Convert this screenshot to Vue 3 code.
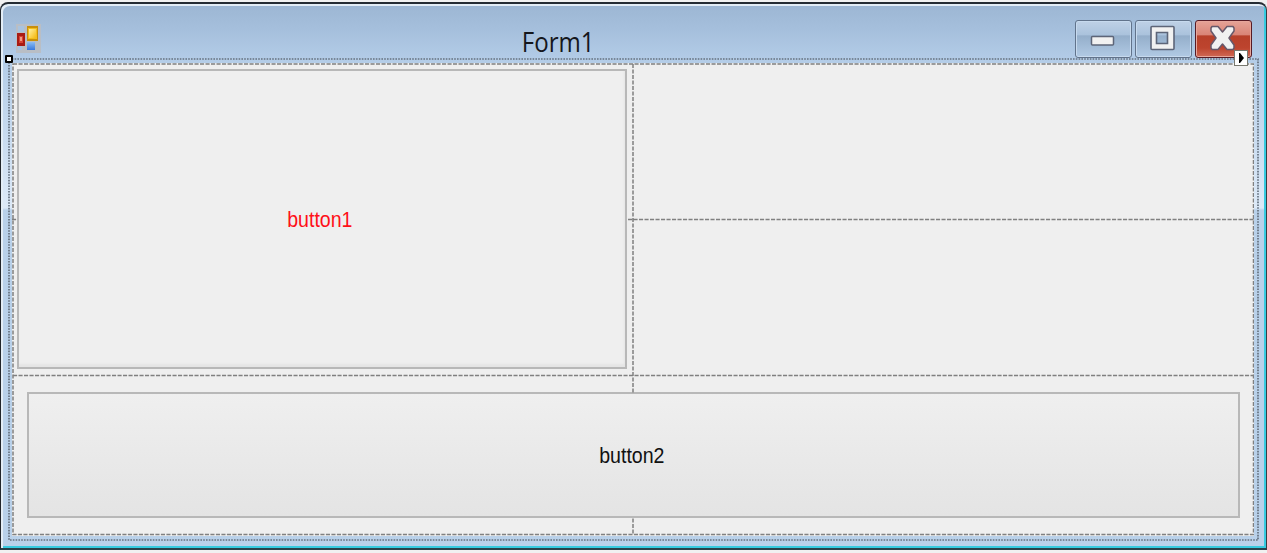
<script setup>
const title = 'Form1'
</script>

<template>
  <main class="window">
    <header class="titlebar">
      <svg class="app-icon" width="25" height="29" viewBox="0 0 25 29">
        <defs>
          <linearGradient id="gold" x2="1" y2="1"><stop stop-color="#fff1a0" /><stop offset="1" stop-color="#f6b910" /></linearGradient>
          <linearGradient id="blue" x2="0" y2="1"><stop stop-color="#8dbdf2" /><stop offset="1" stop-color="#3979df" /></linearGradient>
        </defs>
        <rect width="25" height="29" fill="#b9bec5" />
        <rect x="2" y="2" width="6" height="6" fill="#a9c3df" />
        <rect x="2" y="22" width="4" height="4" fill="#a9c3df" />
        <rect x="1" y="9" width="8" height="13" fill="#a91b13" />
        <rect x="3" y="12" width="4" height="7" fill="#d74334" />
        <rect x="4" y="13" width="2" height="4" fill="#ef9b87" />
        <rect x="11" y="2" width="11" height="15" fill="#c98f0b" />
        <rect x="12" y="4" width="9" height="11" fill="#f2bd1b" />
        <rect x="13" y="5" width="7" height="9" fill="url(#gold)" />
        <rect x="11" y="18" width="8" height="8" fill="url(#blue)" />
      </svg>
      <h1>{{ title }}</h1>
      <div class="controls">
        <span class="control">
          <svg width="57" height="38" viewBox="0 0 57 38"><rect x="16.500" y="16.500" width="22" height="8.500" rx="1" fill="#f1f1f1" stroke="#5d6578" stroke-width="1.500" /></svg>
        </span>
        <span class="control">
          <svg width="57" height="38" viewBox="0 0 57 38"><path d="M17 6.500h21q1 0 1 1v21q0 1-1 1H17q-1 0-1-1v-21q0-1 1-1ZM21.500 12.500v11h11v-11Z" fill="#f1f1f1" fill-rule="evenodd" stroke="#5d6578" stroke-width="1.600" /></svg>
        </span>
        <span class="control close">
          <svg width="57" height="38" viewBox="0 0 57 38"><path d="M17 6.500h6l4.500 5.500 4.500-5.500h6l1 1.500v3l-5 7 5 7v3l-1 1.500h-6l-4.500-5.500-4.500 5.500h-6l-1-1.500v-3l5-7-5-7V8Z" fill="#f1f1f1" stroke="#66586a" stroke-width="1.500" stroke-linejoin="round" /></svg>
        </span>
      </div>
    </header>
    <section class="client">
      <div class="cell first"><button class="one"><span>button1</span></button></div>
      <div class="cell last"><button class="two"><span>button2</span></button></div>
      <svg class="guides" width="1242" height="473">
        <g fill="none" stroke="#808080" stroke-width="1.500" stroke-dasharray="4.100 1.400">
          <rect x="1" y="1" width="1240.500" height="470.500" />
          <path d="M621 1V330M621 455.500V471M0 156.500H5M616 156.500H1242M1 312.500H1242" />
        </g>
      </svg>
    </section>
    <svg class="selection" width="1252" height="484">
      <rect x="1" y="1" width="1249" height="481" fill="none" stroke="#65717f" stroke-width="1.700" stroke-dasharray="1.600 1.200" />
    </svg>
    <i class="handle"></i>
    <svg class="smart-tag" width="14" height="16" viewBox="0 0 14 16">
      <rect x=".5" y=".5" width="13" height="15" fill="#fff" stroke="#77786f" />
      <path d="M5 3h1l4 5-4 5H5Z" fill="#000" />
    </svg>
  </main>
</template>

<style>
body { background: #f1f1f1; overflow: hidden; }
</style>

<style scoped>
* { box-sizing: border-box; }
.window {
  position: relative;
  width: 1267px;
  height: 548px;
  margin-top: 2px;
  border: 2px solid #252c33;
  border-left: 1px solid #22262b;
  border-right: 1px solid #353e45;
  border-bottom: 2px solid #28424c;
  border-radius: 8px 8px 0 0;
  box-shadow: inset 2px 2px #e3edf6, inset -2px -2px #36cbe0;
  background: linear-gradient(#9cb6d3 0, #a5bfdc 25px, #b4cde8 58px, #dce9f7 202px, #dce9f7 204px, #b9d1ea 206px, #b9d1ea 100%);
  font-family: "Liberation Sans", Arial, sans-serif;
}
.titlebar {
  height: 59px;
  display: grid;
  grid-template-columns: 1fr auto 1fr;
  padding: 0 14px 0 15px;
}
.app-icon { margin-top: 20px; }
h1 {
  margin: 17px 0 0;
  width: 82px;
  font: 400 28px/40px "Open Sans", "Noto Sans", sans-serif;
  transform: translateX(-77px) scaleX(.86);
  color: #15171c;
  text-align: center;
}
.controls { display: flex; justify-content: flex-end; gap: 3px; padding-top: 16px; }
.control {
  width: 57px;
  height: 38px;
  border: 1px solid #61738b;
  border-radius: 3px;
  box-shadow: inset 0 0 0 1px #c7daee;
  background: linear-gradient(#bfd1e6 0, #aac2dc 39%, #94aeca 41%, #b1cae4 100%);
}
.control svg { display: block; margin: -1px; }
.close {
  border-color: #571b25;
  box-shadow: inset 0 0 0 1px #e6a69b;
  background: linear-gradient(#e5a397 0, #d98476 39%, #b7402a 41%, #bd442e 75%, #d06955 100%);
}
.client {
  position: relative;
  width: 1242px;
  height: 473px;
  margin-left: 11px;
  display: grid;
  grid-template-columns: 621px 621px;
  grid-template-rows: 312px 161px;
  background: #efefef;
}
.cell { display: flex; }
.first { padding: 6px 6px 6px 5px; }
.last { grid-column: 1 / -1; padding: 17px 14px 18px 15px; }
button {
  flex: 1;
  margin: 0;
  padding: 0;
  border: 2px solid #b8b8b8;
  border-radius: 0;
  font: 21.5px/24px "Liberation Sans", Arial, sans-serif;
}
button span { display: inline-block; transform: translate(-2px, 1px) scaleX(.91); }
.one { color: #ff1018; background: #efefef; box-shadow: inset -1px -3px 2px #e5e5e5; }
.two { color: #111; background: linear-gradient(#efefef, #e4e4e4); }
.guides { position: absolute; left: 0; top: 0; pointer-events: none; }
.selection { position: absolute; left: 7px; top: 54px; pointer-events: none; }
.handle {
  position: absolute;
  left: 4px;
  top: 51px;
  width: 8px;
  height: 8px;
  border: 2px solid #000;
  border-radius: 1px;
  background: #fff;
}
.smart-tag { position: absolute; left: 1233px; top: 46px; }
</style>
